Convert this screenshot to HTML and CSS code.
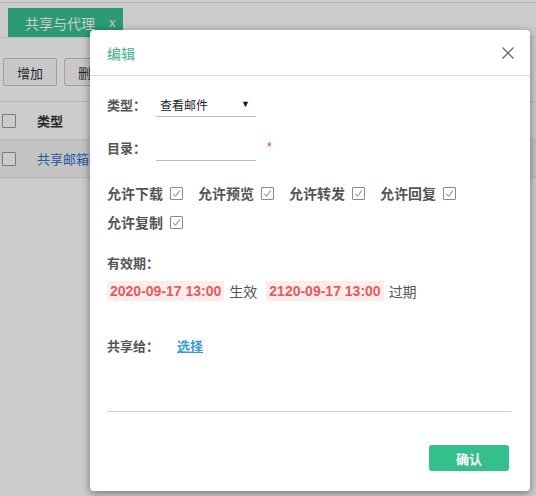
FILE: index.html
```html
<!DOCTYPE html>
<html lang="zh">
<head>
<meta charset="utf-8">
<link rel="stylesheet" href="styles.css">
</head>
<body>
<div class="page">
  <div class="topline"></div>
  <div class="tabs">
    <div class="tab">共享与代理<span class="tab-x">x</span></div>
  </div>
  <div class="toolbar">
    <button class="btn">增加</button>
    <button class="btn">删除</button>
  </div>
  <div class="table">
    <div class="trow thead"><span class="cb"></span><span class="cell">类型</span></div>
    <div class="trow tbody"><span class="cb"></span><span class="cell link">共享邮箱</span></div>
  </div>
</div>
<div class="overlay"></div>
<div class="modal">
  <div class="modal-head">
    <span class="modal-title">编辑</span>
    <svg class="close" width="12" height="12" viewBox="0 0 12 12"><path d="M0.5 0.5L11.5 11.5M11.5 0.5L0.5 11.5" stroke="#6b6b6b" stroke-width="1.3" fill="none"/></svg>
  </div>
  <div class="modal-body">
    <div class="row r-type">
      <span class="label">类型：</span>
      <div class="select"><span>查看邮件</span><span class="arrow">▼</span></div>
    </div>
    <div class="row r-dir">
      <span class="label">目录：</span>
      <div class="input"></div>
      <span class="req">*</span>
    </div>
    <div class="checks">
      <label class="chk">允许下载<span class="box"><svg width="11" height="11" viewBox="0 0 11 11"><path d="M2.2 5.6L4.5 8.3L8.9 2.4" stroke="#666" stroke-width="0.9" fill="none"/></svg></span></label>
      <label class="chk">允许预览<span class="box"><svg width="11" height="11" viewBox="0 0 11 11"><path d="M2.2 5.6L4.5 8.3L8.9 2.4" stroke="#666" stroke-width="0.9" fill="none"/></svg></span></label>
      <label class="chk">允许转发<span class="box"><svg width="11" height="11" viewBox="0 0 11 11"><path d="M2.2 5.6L4.5 8.3L8.9 2.4" stroke="#666" stroke-width="0.9" fill="none"/></svg></span></label>
      <label class="chk">允许回复<span class="box"><svg width="11" height="11" viewBox="0 0 11 11"><path d="M2.2 5.6L4.5 8.3L8.9 2.4" stroke="#666" stroke-width="0.9" fill="none"/></svg></span></label>
      <label class="chk">允许复制<span class="box"><svg width="11" height="11" viewBox="0 0 11 11"><path d="M2.2 5.6L4.5 8.3L8.9 2.4" stroke="#666" stroke-width="0.9" fill="none"/></svg></span></label>
    </div>
    <div class="label-line">有效期：</div>
    <div class="dates">
      <span class="date">2020-09-17 13:00</span><span class="dtext">生效</span>
      <span class="date">2120-09-17 13:00</span><span class="dtext">过期</span>
    </div>
    <div class="row r-share">
      <span class="label">共享给：</span>
      <a class="pick">选择</a>
    </div>
    <div class="divider"></div>
    <div class="foot"><button class="ok">确认</button></div>
  </div>
</div>
</body>
</html>
```
FILE: styles.css
```css
html, body {
  margin: 0;
  padding: 0;
}
body {
  width: 536px;
  height: 496px;
  position: relative;
  overflow: hidden;
  font-family: "Liberation Sans", "Noto Sans CJK SC", sans-serif;
  background: #ffffff;
}
.page {
  height: 496px;
  background: #fff;
}
.topline {
  height: 2px;
  border-bottom: 1px solid #e6e6e6;
  background: #fff;
}
.tabs {
  height: 35px;
  padding: 6px 0 0 8px;
  box-sizing: border-box;
  border-bottom: 1px solid #ececec;
  display: flex;
  align-items: flex-end;
}
.tab {
  width: 115px;
  height: 29px;
  background: #35c28f;
  color: #fff;
  font-size: 14px;
  display: flex;
  align-items: center;
  padding-left: 17px;
  box-sizing: border-box;
}
.tab-x {
  margin-left: 14px;
  font-size: 13px;
}
.toolbar {
  display: flex;
  gap: 7px;
  padding: 20px 0 0 3px;
  height: 48px;
  box-sizing: border-box;
}
.btn {
  width: 54px;
  height: 28px;
  border: 1px solid #c8c8c8;
  border-radius: 2px;
  background: #fafafa;
  font-family: inherit;
  font-size: 13px;
  color: #333;
  padding: 0;
}
.table {
  margin-top: 15px;
}
.trow {
  height: 37px;
  display: flex;
  align-items: center;
  border-top: 1px solid #e4e4e4;
  padding-left: 2px;
}
.thead {
  background: #fff;
}
.tbody {
  background: #f4f4f4;
  border-bottom: 1px solid #e4e4e4;
}
.cb {
  width: 12px;
  height: 12px;
  border: 1px solid #999;
  border-radius: 1px;
  background: #fff;
}
.cell {
  margin-left: 21px;
  font-size: 13px;
  color: #333;
  font-weight: bold;
}
.cell.link {
  font-weight: normal;
  color: #2e6fc8;
}
.overlay {
  position: absolute;
  inset: 0;
  background: rgba(0, 0, 0, 0.2);
}
.modal {
  position: absolute;
  left: 90px;
  top: 30px;
  width: 440px;
  height: 461px;
  background: #fff;
  border-radius: 4px;
  box-shadow: 0 2px 8px rgba(0, 0, 0, 0.45);
}
.modal-head {
  height: 46px;
  border-bottom: 1px solid #dcdcdc;
  display: flex;
  align-items: center;
  justify-content: space-between;
  padding: 0 17px;
  box-sizing: border-box;
}
.modal-title {
  color: #3bb28a;
  font-size: 14px;
}
.close {
  display: block;
  margin-right: -1px;
}
.modal-body {
  padding: 16px 19px 0 17px;
  color: #555;
  font-size: 13px;
}
.row {
  display: flex;
  align-items: center;
}
.label {
  width: 49px;
  font-weight: bold;
  color: #555;
  flex-shrink: 0;
}
.r-type {
  height: 25px;
}
.select {
  width: 100px;
  height: 25px;
  box-sizing: border-box;
  border-bottom: 1px solid #bbb;
  display: flex;
  align-items: center;
  justify-content: space-between;
  padding: 0 6px 0 4px;
  color: #222;
  font-size: 12px;
}
.arrow {
  font-size: 9px;
  color: #111;
}
.r-dir {
  margin-top: 19px;
  height: 25px;
}
.r-dir .label {
  margin-top: -2px;
}
.input {
  width: 100px;
  height: 25px;
  box-sizing: border-box;
  border-bottom: 1px solid #bbb;
}
.req {
  color: #e33;
  font-size: 12px;
  margin-left: 11px;
  margin-top: -4px;
}
.checks {
  margin-top: 22px;
  display: flex;
  flex-wrap: wrap;
  column-gap: 15px;
  row-gap: 9px;
  width: 370px;
}
.chk {
  display: flex;
  align-items: center;
  height: 20px;
  font-weight: bold;
  color: #555;
  font-size: 14px;
}
.box {
  width: 13px;
  height: 13px;
  box-sizing: border-box;
  border: 1px solid #8a8a8a;
  border-radius: 1px;
  margin-left: 7px;
  display: flex;
  align-items: center;
  justify-content: center;
}
.box svg {
  display: block;
}
.label-line {
  margin-top: 22px;
  height: 20px;
  line-height: 20px;
  font-weight: bold;
  color: #555;
}
.dates {
  margin-top: 7px;
  display: flex;
  align-items: center;
  height: 20px;
}
.date {
  background: #fdecec;
  color: #e25c5c;
  font-weight: bold;
  font-size: 14px;
  height: 20px;
  line-height: 20px;
  padding: 0 3px;
}
.dtext {
  margin: 0 9px 0 5px;
  color: #555;
  font-size: 14px;
}
.r-share {
  margin-top: 34px;
  height: 20px;
}
.r-share .label {
  width: 70px;
}
.pick {
  color: #3a9ad9;
  font-weight: bold;
  text-decoration: underline;
  font-size: 13px;
}
.divider {
  margin-top: 56px;
  border-top: 1px solid #cfcfcf;
  width: 404px;
}
.foot {
  display: flex;
  justify-content: flex-end;
  margin-top: 33px;
  padding-right: 2px;
}
.ok {
  width: 80px;
  height: 26px;
  background: #35bf8c;
  border: none;
  border-radius: 3px;
  color: #fff;
  font-family: inherit;
  font-size: 13px;
  font-weight: bold;
  padding: 0;
}
```
